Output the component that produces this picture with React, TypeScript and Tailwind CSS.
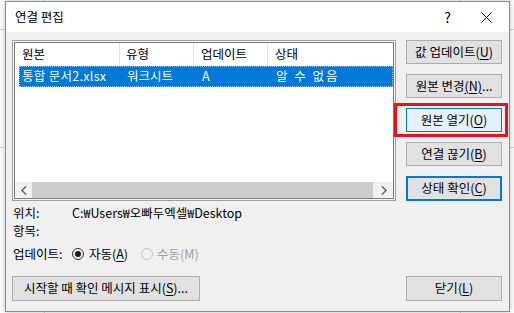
import React from "react";

const font = "font-['Noto_Sans_CJK_KR','Noto_Sans',sans-serif]";

function Btn({
  children,
  variant = "normal",
  className = "",
}: {
  children: React.ReactNode;
  variant?: "normal" | "hover" | "default";
  className?: string;
}) {
  const look =
    variant === "hover"
      ? "bg-[#e5f1fb] border border-[#0078d7]"
      : variant === "default"
        ? "bg-[#e1e1e1] border-2 border-[#0078d7]"
        : "bg-[#e1e1e1] border border-[#adadad]";
  return (
    <div
      className={`flex items-center justify-center text-[12.5px] leading-none text-black ${look} ${className}`}
    >
      {children}
    </div>
  );
}

function Key({ k }: { k: string }) {
  return (
    <>
      (<span className="underline underline-offset-2">{k}</span>)
    </>
  );
}

function Chevron({ dir }: { dir: "left" | "right" }) {
  return (
    <svg width="6" height="9" viewBox="0 0 6 9">
      <path
        d={dir === "left" ? "M5 0.5 L1 4.5 L5 8.5" : "M1 0.5 L5 4.5 L1 8.5"}
        fill="none"
        stroke="#606060"
        strokeWidth="1.5"
      />
    </svg>
  );
}

export default function App() {
  return (
    <div className={`relative w-[514px] h-[313px] overflow-hidden bg-white ${font}`}>
      {/* spreadsheet behind the dialog */}
      <div className="absolute left-0 top-[29px] w-full h-px bg-[#d4d4d4]" />
      <div className="absolute left-0 top-[147px] w-full h-px bg-[#d4d4d4]" />
      <div className="absolute left-[44px] top-0 w-px h-full bg-[#d4d4d4]" />
      <div className="absolute left-[460px] top-0 w-px h-full bg-[#d4d4d4]" />

      {/* dialog window */}
      <div className="absolute left-[5px] top-[1px] w-[505px] h-[311px] border border-[#8c8c8c] bg-[#f0f0f0] flex flex-col shadow-[0_0_6px_rgba(0,0,0,0.25)]">
        {/* title bar */}
        <div className="h-[30px] bg-white flex items-center pl-[9px] shrink-0">
          <span className="text-[12.5px] text-black leading-none">연결 편집</span>
          <span className="ml-auto mr-[30px] text-[14px] leading-none text-black">?</span>
          <svg width="11" height="11" viewBox="0 0 11 11" className="mr-[17px]">
            <path d="M0.5 0.5 L10.5 10.5 M10.5 0.5 L0.5 10.5" stroke="#000" strokeWidth="1" />
          </svg>
        </div>

        {/* body */}
        <div className="flex-1 flex flex-col pl-[6px] pr-[7px] pt-[8px]">
          <div className="flex">
            {/* list view */}
            <div className="w-[384px] h-[161px] border border-[#a0a0a0] p-px bg-[#f6f6f6]">
              <div className="w-full h-full border border-[#7a7a7a] bg-white flex flex-col">
                <div className="h-[23px] flex text-[12.5px] leading-none text-black shrink-0">
                  <div className="w-[105px] flex items-center pl-[7px] border-r border-[#e5e5e5]">원본</div>
                  <div className="w-[74px] flex items-center pl-[6px] border-r border-[#e5e5e5]">유형</div>
                  <div className="w-[74px] flex items-center pl-[7px] border-r border-[#e5e5e5]">업데이트</div>
                  <div className="flex-1 flex items-center pl-[7px]">상태</div>
                </div>
                <div className="ml-[4px] h-[21px] bg-[#0078d7] border border-dotted border-[#8ec2f0] flex text-[12.5px] leading-none text-white shrink-0">
                  <div className="w-[101px] flex items-center pl-[2px] tracking-[0.3px]">통합 문서2.xlsx</div>
                  <div className="w-[75px] flex items-center pl-[6px]">워크시트</div>
                  <div className="w-[74px] flex items-center pl-[6px]">A</div>
                  <div className="flex-1 flex items-center pl-[6px] tracking-[2px]">알 수 없음</div>
                </div>
                <div className="flex-1" />
                <div className="h-[16px] bg-[#f0f0f0] flex items-center shrink-0">
                  <div className="w-[17px] flex justify-center">
                    <Chevron dir="left" />
                  </div>
                  <div className="flex-1 h-full bg-[#cdcdcd]" />
                  <div className="w-[20px] flex justify-end pr-[6px]">
                    <Chevron dir="right" />
                  </div>
                </div>
              </div>
            </div>

            {/* button column */}
            <div className="ml-auto w-[96px] flex flex-col gap-[10px]">
              <Btn className="h-[24px]">
                값 업데이트<Key k="U" />
              </Btn>
              <Btn className="h-[24px]">
                원본 변경<span className="underline underline-offset-2">(N)</span>...
              </Btn>
              <Btn className="h-[24px]" variant="hover">
                원본 열기<Key k="O" />
              </Btn>
              <Btn className="h-[24px]">
                연결 끊기<Key k="B" />
              </Btn>
              <Btn className="h-[25px]" variant="default">
                상태 확인<Key k="C" />
              </Btn>
            </div>
          </div>

          {/* info rows */}
          <div className="mt-[3px] pl-[1px] flex flex-col text-[12.5px] leading-[14px] text-black">
            <div className="h-[18px] flex items-center">
              <span className="w-[59px]">위치:</span>
              <span>C:₩Users₩오빠두엑셀₩Desktop</span>
            </div>
            <div className="h-[18px] flex items-center">항목:</div>
            <div className="mt-[4px] h-[20px] flex items-center">
              <span className="w-[59px]">업데이트:</span>
              <span className="w-[12px] h-[12px] rounded-full border border-[#333] flex items-center justify-center">
                <span className="w-[6px] h-[6px] rounded-full bg-[#1a1a1a]" />
              </span>
              <span className="ml-[5px]">
                자동<Key k="A" />
              </span>
              <span className="ml-[13px] w-[12px] h-[12px] rounded-full border border-[#c4c4c4]" />
              <span className="ml-[4px] text-[#a0a0a0]">수동(M)</span>
            </div>
          </div>

          {/* bottom buttons */}
          <div className="mt-[12px] flex">
            <Btn className="w-[188px] h-[25px]">
              시작할 때 확인 메시지 표시<Key k="S" />...
            </Btn>
            <Btn className="ml-auto w-[96px] h-[25px]">
              닫기<Key k="L" />
            </Btn>
          </div>
        </div>
      </div>

      {/* red highlight around 원본 열기 */}
      <div className="absolute left-[394px] top-[103px] w-[114px] h-[34px] border-[3px] border-[#e8121b]" />
    </div>
  );
}
